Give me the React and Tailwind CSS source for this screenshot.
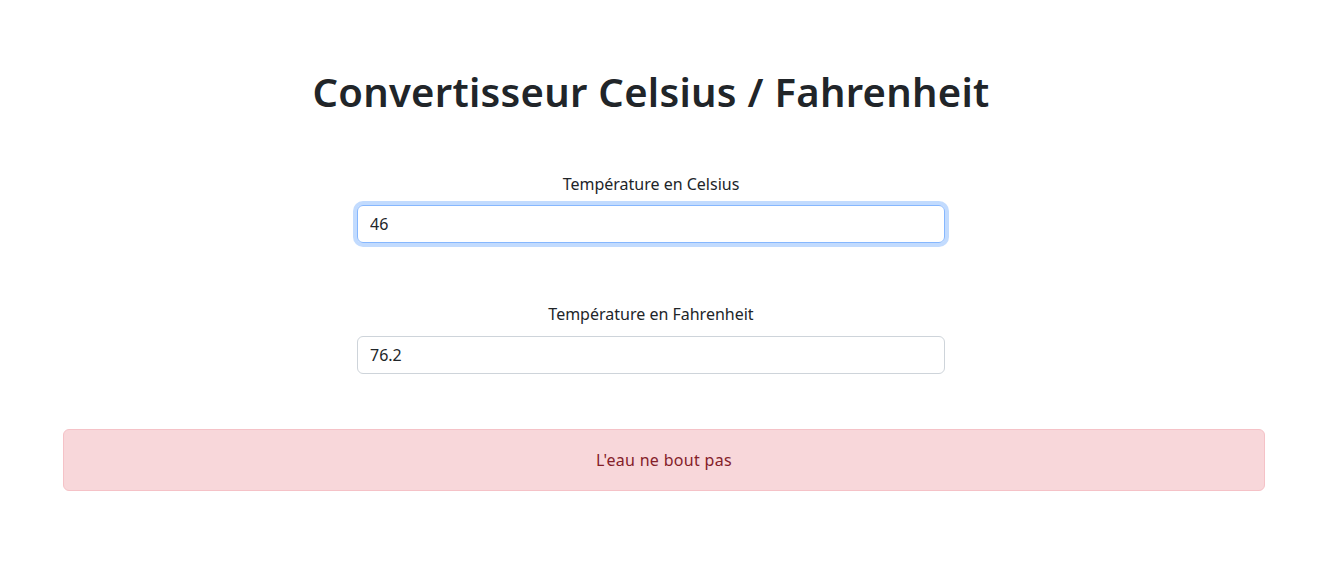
export default function App() {
  return (
    <div className="min-h-[566px] bg-white text-[#212529] [font-family:'Noto_Sans','Open_Sans',sans-serif]">
      <div className="pt-[68px] pr-[16px] flex flex-col items-center">
        <h1 className="text-[40px] leading-[48px] font-semibold tracking-[0.28px] text-[#212529] text-center">
          Convertisseur Celsius / Fahrenheit
        </h1>
        <div className="mt-[56px] w-[588px] flex flex-col items-center">
          <label className="text-[16px] leading-[24px] text-[#212529]">Température en Celsius</label>
          <input
            readOnly
            value="46"
            className="mt-[9px] w-full h-[38px] rounded-[6px] border border-[#86b7fe] px-3 text-[16px] text-[#212529] outline-none shadow-[0_0_0_4px_rgba(13,110,253,0.25)]"
          />
        </div>
        <div className="mt-[59px] w-[588px] flex flex-col items-center">
          <label className="text-[16px] leading-[24px] text-[#212529]">Température en Fahrenheit</label>
          <input
            readOnly
            value="76.2"
            className="mt-[10px] w-full h-[38px] rounded-[6px] border border-[#ced4da] px-3 text-[16px] text-[#212529] outline-none"
          />
        </div>
      </div>
      <div className="mt-[55px] ml-[63px] w-[1202px] h-[62px] rounded-[6px] border border-[#f5c2c7] bg-[#f8d7da] text-[#842029] flex items-center justify-center text-[16px] tracking-[0.3px]">
        L'eau ne bout pas
      </div>
    </div>
  );
}
